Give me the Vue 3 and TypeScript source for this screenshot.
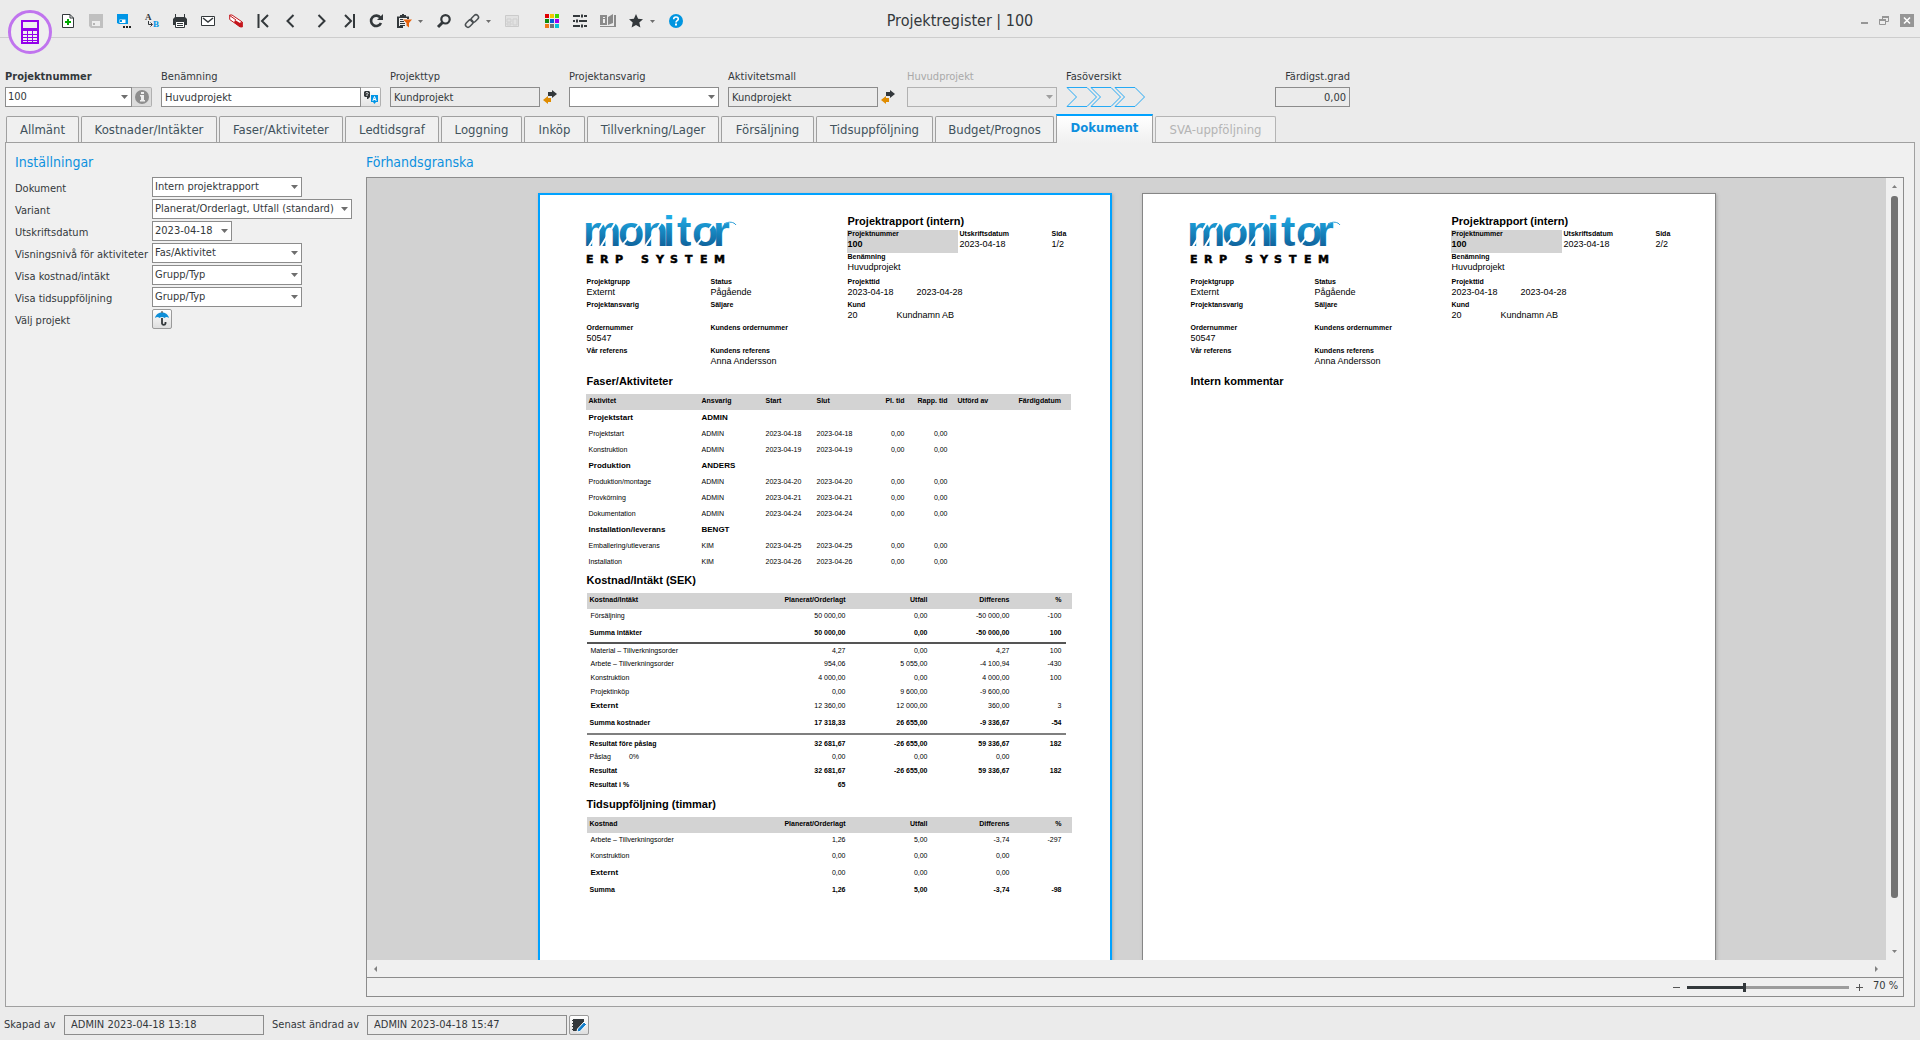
<script setup lang="ts">
import { ref } from 'vue'

interface Tab { label: string; width: number; disabled?: boolean }
interface Setting { id: string; label: string; value: string; size: string }
interface Activity { name: string; who: string; start?: string; end?: string; group?: boolean }
interface CostRow { label: string; plan: string; actual: string; diff: string; pct: string; kind: string; extra?: string }

const tabs: Tab[] = [
  { label: 'Allmänt', width: 73 },
  { label: 'Kostnader/Intäkter', width: 136 },
  { label: 'Faser/Aktiviteter', width: 124 },
  { label: 'Ledtidsgraf', width: 94 },
  { label: 'Loggning', width: 81 },
  { label: 'Inköp', width: 61 },
  { label: 'Tillverkning/Lager', width: 132 },
  { label: 'Försäljning', width: 93 },
  { label: 'Tidsuppföljning', width: 117 },
  { label: 'Budget/Prognos', width: 119 },
  { label: 'Dokument', width: 97 },
  { label: 'SVA-uppföljning', width: 121, disabled: true },
]
const activeTab = ref('Dokument')
const zoom = ref(35)

const settings: Setting[] = [
  { id: 'doc', label: 'Dokument', value: 'Intern projektrapport', size: 'medium' },
  { id: 'variant', label: 'Variant', value: 'Planerat/Orderlagt, Utfall (standard)', size: 'wide' },
  { id: 'date', label: 'Utskriftsdatum', value: '2023-04-18', size: 'small' },
  { id: 'level', label: 'Visningsnivå för aktiviteter', value: 'Fas/Aktivitet', size: 'medium' },
  { id: 'cost', label: 'Visa kostnad/intäkt', value: 'Grupp/Typ', size: 'medium' },
  { id: 'time', label: 'Visa tidsuppföljning', value: 'Grupp/Typ', size: 'medium' },
]

const activities: Activity[] = [
  { name: 'Projektstart', who: 'ADMIN', group: true },
  { name: 'Projektstart', who: 'ADMIN', start: '2023-04-18', end: '2023-04-18' },
  { name: 'Konstruktion', who: 'ADMIN', start: '2023-04-19', end: '2023-04-19' },
  { name: 'Produktion', who: 'ANDERS', group: true },
  { name: 'Produktion/montage', who: 'ADMIN', start: '2023-04-20', end: '2023-04-20' },
  { name: 'Provkörning', who: 'ADMIN', start: '2023-04-21', end: '2023-04-21' },
  { name: 'Dokumentation', who: 'ADMIN', start: '2023-04-24', end: '2023-04-24' },
  { name: 'Installation/leverans', who: 'BENGT', group: true },
  { name: 'Emballering/utleverans', who: 'KIM', start: '2023-04-25', end: '2023-04-25' },
  { name: 'Installation', who: 'KIM', start: '2023-04-26', end: '2023-04-26' },
]

const costs: CostRow[] = [
  { label: 'Försäljning', plan: '50 000,00', actual: '0,00', diff: '-50 000,00', pct: '-100', kind: 'item' },
  { label: 'Summa intäkter', plan: '50 000,00', actual: '0,00', diff: '-50 000,00', pct: '100', kind: 'sum ruled' },
  { label: 'Material – Tillverkningsorder', plan: '4,27', actual: '0,00', diff: '4,27', pct: '100', kind: 'item' },
  { label: 'Arbete – Tillverkningsorder', plan: '954,06', actual: '5 055,00', diff: '-4 100,94', pct: '-430', kind: 'item' },
  { label: 'Konstruktion', plan: '4 000,00', actual: '0,00', diff: '4 000,00', pct: '100', kind: 'item' },
  { label: 'Projektinköp', plan: '0,00', actual: '9 600,00', diff: '-9 600,00', pct: '', kind: 'item' },
  { label: 'Externt', plan: '12 360,00', actual: '12 000,00', diff: '360,00', pct: '3', kind: 'item head' },
  { label: 'Summa kostnader', plan: '17 318,33', actual: '26 655,00', diff: '-9 336,67', pct: '-54', kind: 'sum ruled soft' },
  { label: 'Resultat före påslag', plan: '32 681,67', actual: '-26 655,00', diff: '59 336,67', pct: '182', kind: 'sum lead' },
  { label: 'Påslag', extra: '0%', plan: '0,00', actual: '0,00', diff: '0,00', pct: '', kind: 'result' },
  { label: 'Resultat', plan: '32 681,67', actual: '-26 655,00', diff: '59 336,67', pct: '182', kind: 'result bold' },
  { label: 'Resultat i %', plan: '65', actual: '', diff: '', pct: '', kind: 'result bold' },
]

const hours: CostRow[] = [
  { label: 'Arbete – Tillverkningsorder', plan: '1,26', actual: '5,00', diff: '-3,74', pct: '-297', kind: 'item' },
  { label: 'Konstruktion', plan: '0,00', actual: '0,00', diff: '0,00', pct: '', kind: 'item roomy' },
  { label: 'Externt', plan: '0,00', actual: '0,00', diff: '0,00', pct: '', kind: 'item head roomy' },
  { label: 'Summa', plan: '1,26', actual: '5,00', diff: '-3,74', pct: '-98', kind: 'sum roomy' },
]

const tables = [
  { title: 'Kostnad/Intäkt (SEK)', first: 'Kostnad/Intäkt', rows: costs },
  { title: 'Tidsuppföljning (timmar)', first: 'Kostnad', rows: hours },
]

const swatches = ['#e00000', '#f0c800', '#3fd800', '#108a10', '#0060d8', '#9a00f0', '#f07818', '#6e7478', '#00c4d8']
</script>

<template>
  <div class="app">
    <header class="toolbar">
      <div class="badge">
        <svg width="44" height="44" viewBox="0 0 44 44">
          <circle cx="22" cy="22" r="20.5" fill="#efefef" stroke="#c074ee" stroke-width="3" />
          <path d="M13 10H31V34H13Z" fill="#9400ea" />
          <path d="M15 12H29V18H15Z" fill="#efefef" />
          <path d="M15 21h4v3h-4zM20 21h4v3h-4zM25 21h4v3h-4zM15 25h4v2h-4zM20 25h4v2h-4zM25 25h4v2h-4zM15 28h4v2h-4zM20 28h4v2h-4zM25 28h4v2h-4zM15 31h4v1h-4zM20 31h4v1h-4zM25 31h4v1h-4z" fill="#efefef" />
        </svg>
      </div>
      <nav class="tools">
        <button aria-label="Ny"><svg width="14" height="14" viewBox="0 0 14 14"><path d="M1.500.5H9L12.500 4V13.500H1.500Z" fill="#fff" stroke="#33383b" /><path d="M9 .5V4H12.500" fill="none" stroke="#33383b" /><path d="M6 5h2v2h2v2H8v2H6V9H4V7h2z" fill="#00a800" /></svg></button>
        <button aria-label="Spara"><svg width="14" height="14" viewBox="0 0 14 14"><path d="M0 0H14V14H2L0 12Z" fill="#c0c0c0" /><path d="M3 7h8v5H3z" fill="#ededed" /><path d="M4 9h2v2H4z" fill="#b5b5b5" /></svg></button>
        <button aria-label="Spara som"><svg width="14" height="14" viewBox="0 0 14 14"><path d="M0 0H11V10H2L0 9Z" fill="#0095e6" /><path d="M2.500 5.500h6V9h-6z" fill="#fff" /><path d="M3 6h2v2H3z" fill="#0095e6" /><path d="M6 12h2v2H6zM9 12h2v2H9zM12 12h2v2h-2z" fill="#222" /></svg></button>
        <button aria-label="Byt namn"><svg width="16" height="16" viewBox="0 0 16 16"><text x="1" y="7" class="glyph dark">A</text><text x="9" y="14" class="glyph blue">B</text><path d="M4.500 8V11.500H8M6.500 9.500L8.500 11.500L6.500 13.500" fill="none" stroke="#33383b" /></svg></button>
        <button aria-label="Skriv ut"><svg width="14" height="14" viewBox="0 0 14 14"><path d="M3 0H11V3H12V0H2V3H3Z" fill="#33383b" /><path d="M0 5 2 3H12L14 5V11H12V8H2V11H0Z" fill="#33383b" /><path d="M2.500 7.500H11.500V13.500H2.500Z" fill="#fff" stroke="#33383b" /><path d="M4 9.500H10M4 11.500H10" stroke="#33383b" /></svg></button>
        <button aria-label="E-post"><svg width="14" height="14" viewBox="0 0 14 14"><path d="M.5 2.500H13.500V11.500H.5Z" fill="#fff" stroke="#33383b" /><path d="M2 4 7 8 12 4" fill="none" stroke="#33383b" stroke-width="1.500" /></svg></button>
        <button aria-label="Ta bort"><svg width="14" height="14" viewBox="0 0 14 14"><path d="M.7 1 3 1 13.300 8V13L11 12.800.7 5.500Z" fill="#fff" stroke="#c4161c" /><path d="M6 6 11 9V13.300L5 8.500ZM11 8.500 13.500 8V13H11Z" fill="#c4161c" /><path d="M.7 1.500 7 6" stroke="#c4161c" /></svg></button>
        <button aria-label="Första"><svg width="14" height="14" viewBox="0 0 14 14"><path d="M1.500 0V14M11 1 5 7 11 13" fill="none" stroke="#33383b" stroke-width="2" /></svg></button>
        <button aria-label="Föregående"><svg width="14" height="14" viewBox="0 0 14 14"><path d="M8.500 1 2.500 7 8.500 13" fill="none" stroke="#33383b" stroke-width="2" /></svg></button>
        <button aria-label="Nästa"><svg width="14" height="14" viewBox="0 0 14 14"><path d="M5.500 1 11.500 7 5.500 13" fill="none" stroke="#33383b" stroke-width="2" /></svg></button>
        <button aria-label="Sista"><svg width="14" height="14" viewBox="0 0 14 14"><path d="M13 0V14M4 1 10 7 4 13" fill="none" stroke="#33383b" stroke-width="2" /></svg></button>
        <button aria-label="Uppdatera"><svg width="14" height="14" viewBox="0 0 14 14"><path d="M11.500 3.800A5.200 5.200 0 1 0 12 9" fill="none" stroke="#33383b" stroke-width="2.600" /><path d="M14 0V6H8Z" fill="#33383b" /></svg></button>
        <button aria-label="Urval"><svg width="16" height="14" viewBox="0 0 16 14"><path d="M1 2.500H4V1H6V0H8V1H10V2.500H13V5H11V4H3V12H7V14H1Z" fill="#33383b" /><path d="M3 4H11V12H3Z" fill="#eee" /><path d="M4 5.500H7M4 7.500H8M4 9.500H9M4 11.500H9" stroke="#33383b" /><path d="M7 5.500H16L13 9V13.500L10.500 11.500V9Z" fill="#e8610a" /></svg></button>
        <button class="caret" aria-label="Fler urval"><svg width="5" height="3" viewBox="0 0 5 3"><path d="M0 0H5L2.500 3Z" fill="#6e6e6e" /></svg></button>
        <button aria-label="Sök"><svg width="14" height="14" viewBox="0 0 14 14"><circle cx="8.500" cy="5.300" r="4.200" fill="none" stroke="#33383b" stroke-width="2.200" /><path d="M5.500 8.500 1 13" stroke="#33383b" stroke-width="3" /></svg></button>
        <button aria-label="Länka"><svg width="14" height="14" viewBox="0 0 14 14"><g fill="none" stroke="#4a4f52" stroke-width="1.500"><rect x="5.500" y="2" width="8.500" height="5" rx="2.500" transform="rotate(-45 9.750 4.500)" /><rect x="0" y="7" width="8.500" height="5" rx="2.500" transform="rotate(-45 4.250 9.500)" /></g></svg></button>
        <button class="caret" aria-label="Fler länkar"><svg width="5" height="3" viewBox="0 0 5 3"><path d="M0 0H5L2.500 3Z" fill="#6e6e6e" /></svg></button>
        <button aria-label="Layout"><svg width="14" height="14" viewBox="0 0 14 14"><path d="M.5 1.500H13.500V12.500H.5Z" fill="#e2e2e2" stroke="#cbcbcb" /><path d="M2 5H6V8H2ZM2 9H6V11H2ZM8 5H12V11H8Z" fill="none" stroke="#cfcfcf" /></svg></button>
        <span class="spacer"></span>
        <button aria-label="Färger"><svg width="14" height="14" viewBox="0 0 14 14"><rect v-for="(c, i) in swatches" :key="c" :x="(i % 3) * 5" :y="Math.floor(i / 3) * 5" width="4" height="4" :fill="c" /></svg></button>
        <button aria-label="Inställningar"><svg width="14" height="14" viewBox="0 0 14 14"><path d="M0 2H7M11 2H14M0 7H2M6 7H14M0 12H7M11 12H14" stroke="#33383b" stroke-width="2" /><path d="M8 .5h2v3H8zM3 5.500h2v3H3zM8 10.500h2v3H8z" fill="#33383b" /></svg></button>
        <button aria-label="Handbok"><svg width="16" height="14" viewBox="0 0 16 14"><path d="M0 1H7V11H0ZM8 3 13 0V9L8 11ZM14 1H16V13H0V12H14Z" fill="#8a8a8a" /><path d="M3 3h2v1H3zM3 5h2v4H3z" fill="#eee" /></svg></button>
        <button aria-label="Favorit"><svg width="14" height="14" viewBox="0 0 14 14"><path d="M7 0 9.100 4.800 14 5.200 10.300 8.600 11.400 13.600 7 11 2.600 13.600 3.700 8.600 0 5.200 4.900 4.800Z" fill="#33383b" /></svg></button>
        <button class="caret" aria-label="Fler favoriter"><svg width="5" height="3" viewBox="0 0 5 3"><path d="M0 0H5L2.500 3Z" fill="#6e6e6e" /></svg></button>
        <button aria-label="Hjälp"><svg width="14" height="14" viewBox="0 0 14 14"><circle cx="7" cy="7" r="7" fill="#0095e0" /><path d="M4.700 5.200C4.700 2.200 9.300 2.300 9.300 5 9.300 6.700 7 6.700 7 8.500" fill="none" stroke="#fff" stroke-width="1.600" /><rect x="6" y="9.500" width="2" height="2" fill="#fff" /></svg></button>
      </nav>
      <h1 class="title">Projektregister | 100</h1>
      <div class="window">
        <button aria-label="Minimera"><svg width="7" height="14" viewBox="0 0 7 14"><path d="M0 8H7V10H0Z" fill="#969696" /></svg></button>
        <button aria-label="Återställ"><svg width="10" height="14" viewBox="0 0 10 14"><path d="M3.500 5V2.500H9.500V7.500H7" fill="none" stroke="#969696" /><path d="M3 2H10V4H3Z" fill="#969696" /><path d="M.5 5.500H6.500V10.500H.5Z" fill="#eee" stroke="#969696" /><path d="M0 5H7V7H0Z" fill="#969696" /></svg></button>
        <button aria-label="Stäng"><svg width="14" height="14" viewBox="0 0 14 14"><path d="M0 0H14V13H0Z" fill="#969696" /><path d="M4 3.500 10 9.500M10 3.500 4 9.500" stroke="#fff" stroke-width="1.600" /></svg></button>
      </div>
    </header>

    <form class="fields" @submit.prevent>
      <div class="field number">
        <label class="strong" for="projnr">Projektnummer</label>
        <div class="row"><select id="projnr"><option>100</option></select><button class="side" type="button" aria-label="Information"><svg width="14" height="14" viewBox="0 0 14 14"><circle cx="7" cy="7" r="7" fill="#8e8e8e" /><path d="M6 2h3v2H6zM5 5h4v5h1v1.500H5V10h1V6.500H5z" fill="#efefef" /></svg></button></div>
      </div>
      <div class="field name">
        <label for="name">Benämning</label>
        <div class="row"><input id="name" type="text" value="Huvudprojekt" /><button class="side light" type="button" aria-label="Översätt"><svg width="16" height="14" viewBox="0 0 16 14"><path d="M2 1H6L7 2V7L5 9H4V7H2L1 6V2Z" fill="#33383b" /><path d="M2.800 3.200C3 2.200 5.300 2.300 5.200 3.500L4 4.700V6" fill="none" stroke="#eee" /><path d="M8 5H15V12H13L11.500 14 10 12H8Z" fill="#0095e6" /><path d="M9.800 11 11.500 6.500 13.200 11M10.500 9.500H12.500" fill="none" stroke="#fff" /></svg></button></div>
      </div>
      <div class="field std">
        <label for="type">Projekttyp</label>
        <input id="type" type="text" value="Kundprojekt" readonly />
      </div>
      <button class="swap" type="button" aria-label="Byt projekttyp"><svg width="14" height="14" viewBox="0 0 14 14"><path d="M5 2H9V0L14 4 9 8V6H5Z" fill="#33383b" /><path d="M8 8H5V6L0 10 5 14V12H8Z" fill="#e08c00" /></svg></button>
      <div class="field std">
        <label for="owner">Projektansvarig</label>
        <select id="owner"><option></option></select>
      </div>
      <div class="field std after">
        <label for="template">Aktivitetsmall</label>
        <input id="template" type="text" value="Kundprojekt" readonly />
      </div>
      <button class="swap" type="button" aria-label="Byt mall"><svg width="14" height="14" viewBox="0 0 14 14"><path d="M5 2H9V0L14 4 9 8V6H5Z" fill="#33383b" /><path d="M8 8H5V6L0 10 5 14V12H8Z" fill="#e08c00" /></svg></button>
      <div class="field std">
        <label class="dim" for="parent">Huvudprojekt</label>
        <select id="parent" disabled><option></option></select>
      </div>
      <div class="field phases after">
        <span class="caption">Fasöversikt</span>
        <svg width="80" height="20" viewBox="0 0 80 20" fill="none" stroke="#26aaf5"><path d="M1 .5H21L30.500 10 21 19.500H1L10.500 10Z" /><path d="M25 .5H45L54.500 10 45 19.500H25L34.500 10Z" /><path d="M49 .5H69L78.500 10 69 19.500H49L58.500 10Z" /></svg>
      </div>
      <div class="field degree">
        <label for="degree">Färdigst.grad</label>
        <input id="degree" type="text" value="0,00" readonly />
      </div>
    </form>

    <div class="tabs" role="tablist">
      <button v-for="t in tabs" :key="t.label" role="tab" class="tab" :class="{ active: t.label === activeTab }" :disabled="t.disabled" :style="{ width: t.width + 'px' }" @click="activeTab = t.label">{{ t.label }}</button>
    </div>

    <main class="panel">
      <section class="settings">
        <h2>Inställningar</h2>
        <div v-for="s in settings" :key="s.id" class="setting">
          <label :for="s.id">{{ s.label }}</label>
          <select :id="s.id" :class="s.size"><option>{{ s.value }}</option></select>
        </div>
        <div class="setting">
          <label for="pick">Välj projekt</label>
          <button id="pick" class="small-btn" type="button" aria-label="Välj projekt"><svg width="14" height="16" viewBox="0 0 14 16"><path d="M0 7C1 3 4 1.500 7 1.500S13 3 14 7C12 5.500 11 5.500 9.500 7 8 5.700 6 5.700 4.500 7 3 5.500 2 5.500 0 7Z" fill="#0f8fd8" /><path d="M7 0V2" stroke="#33383b" /><path d="M7 7V12.500A1.800 1.800 0 0 0 10.500 12.500V11" fill="none" stroke="#33383b" stroke-width="1.800" /></svg></button>
        </div>
      </section>

      <section class="preview">
        <h2>Förhandsgranska</h2>
        <div class="viewer">
          <div class="view-row">
            <div class="canvas">
              <article v-for="page in 2" :key="page" class="page" :class="{ selected: page === 1 }">
                <header class="report-head">
                  <div class="head-left">
                    <svg class="logo" width="152" height="62" viewBox="0 0 152 62" role="img" aria-label="monitor ERP SYSTEM">
                      <defs><linearGradient id="brand" x1="0" y1="0" x2="0" y2="34" gradientUnits="userSpaceOnUse"><stop offset="0" stop-color="#1fb0ea" /><stop offset="1" stop-color="#0f5f98" /></linearGradient></defs>
                      <text class="word" y="32" x="-3 32 56 77 91 106 127" fill="url(#brand)">monitor</text>
                      <path d="M138 10C143 7 148 8 150 11" fill="none" stroke="#2a9ed8" />
                      <path d="M2 34 17 9M14 34 29 9M34 34 54 9M58 34 75 9M108 34 128 9" stroke="#fff" stroke-width="2" />
                      <text class="sub" y="49" x="0 14 29 40 55 70 84 99 114 128">ERP SYSTEM</text>
                    </svg>
                    <dl class="facts">
                      <div><dt>Projektgrupp</dt><dd>Externt</dd></div>
                      <div><dt>Status</dt><dd>Pågående</dd></div>
                      <div><dt>Projektansvarig</dt><dd></dd></div>
                      <div><dt>Säljare</dt><dd></dd></div>
                      <div><dt>Ordernummer</dt><dd>50547</dd></div>
                      <div><dt>Kundens ordernummer</dt><dd></dd></div>
                      <div><dt>Vår referens</dt><dd></dd></div>
                      <div><dt>Kundens referens</dt><dd>Anna Andersson</dd></div>
                    </dl>
                  </div>
                  <div class="head-right">
                    <h3>Projektrapport (intern)</h3>
                    <dl class="ids">
                      <div class="shaded"><dt>Projektnummer</dt><dd>100</dd></div>
                      <div class="print-date"><dt>Utskriftsdatum</dt><dd>2023-04-18</dd></div>
                      <div><dt>Sida</dt><dd>{{ page }}/2</dd></div>
                    </dl>
                    <dl class="ids"><div><dt>Benämning</dt><dd>Huvudprojekt</dd></div></dl>
                    <dl class="facts single">
                      <div><dt>Projekttid</dt><dd><span class="from">2023-04-18</span><span>2023-04-28</span></dd></div>
                      <div><dt>Kund</dt><dd><span class="cust">20</span><span>Kundnamn AB</span></dd></div>
                    </dl>
                  </div>
                </header>

                <template v-if="page === 1">
                  <h3 class="section">Faser/Aktiviteter</h3>
                  <table class="acts">
                    <colgroup><col class="a1" /><col class="a2" /><col class="a3" /><col class="a3b" /><col class="a4" /><col class="a5" /><col class="a6" /><col /></colgroup>
                    <thead><tr><th>Aktivitet</th><th>Ansvarig</th><th>Start</th><th>Slut</th><th class="r">Pl. tid</th><th class="r">Rapp. tid</th><th class="by">Utförd av</th><th>Färdigdatum</th></tr></thead>
                    <tbody>
                      <tr v-for="(a, i) in activities" :key="i" :class="{ group: a.group }">
                        <td>{{ a.name }}</td><td>{{ a.who }}</td><td>{{ a.start }}</td><td>{{ a.end }}</td>
                        <td class="r">{{ a.group ? '' : '0,00' }}</td><td class="r">{{ a.group ? '' : '0,00' }}</td><td></td><td></td>
                      </tr>
                    </tbody>
                  </table>
                  <template v-for="t in tables" :key="t.title">
                    <h3 class="section">{{ t.title }}</h3>
                    <table class="money">
                      <colgroup><col class="m1" /><col class="m2" /><col class="m3" /><col class="m3" /><col class="m4" /><col /></colgroup>
                      <thead><tr><th>{{ t.first }}</th><th class="r">Planerat/Orderlagt</th><th class="r">Utfall</th><th class="r">Differens</th><th class="r pct">%</th><th></th></tr></thead>
                      <tbody>
                        <tr v-for="r in t.rows" :key="r.label" :class="r.kind">
                          <td>{{ r.label }}<span v-if="r.extra" class="extra">{{ r.extra }}</span></td>
                          <td class="r">{{ r.plan }}</td><td class="r">{{ r.actual }}</td><td class="r">{{ r.diff }}</td><td class="r pct">{{ r.pct }}</td><td class="tail"></td>
                        </tr>
                      </tbody>
                    </table>
                  </template>
                </template>
                <h3 v-else class="section">Intern kommentar</h3>
              </article>
            </div>
            <div class="vbar">
              <svg width="5" height="3" viewBox="0 0 5 3"><path d="M0 3H5L2.500 0Z" fill="#808080" /></svg>
              <span class="thumb"></span>
              <svg width="5" height="3" viewBox="0 0 5 3"><path d="M0 0H5L2.500 3Z" fill="#808080" /></svg>
            </div>
          </div>
          <div class="hbar">
            <svg width="3" height="6" viewBox="0 0 3 6"><path d="M3 0V6L0 3Z" fill="#808080" /></svg>
            <svg width="3" height="6" viewBox="0 0 3 6"><path d="M0 0V6L3 3Z" fill="#808080" /></svg>
          </div>
          <div class="zoombar">
            <button type="button" aria-label="Zooma ut"><svg width="7" height="7" viewBox="0 0 7 7"><path d="M0 3.500H7" stroke="#555" /></svg></button>
            <input v-model="zoom" type="range" min="0" max="100" aria-label="Zoom" />
            <button type="button" aria-label="Zooma in"><svg width="7" height="7" viewBox="0 0 7 7"><path d="M0 3.500H7M3.500 0V7" stroke="#555" /></svg></button>
            <output>70 %</output>
          </div>
        </div>
      </section>
    </main>

    <footer class="status">
      <label for="created">Skapad av</label>
      <input id="created" class="created" type="text" value="ADMIN 2023-04-18 13:18" readonly />
      <label for="changed">Senast ändrad av</label>
      <input id="changed" type="text" value="ADMIN 2023-04-18 15:47" readonly />
      <button class="small-btn" type="button" aria-label="Ändringslogg"><svg width="16" height="16" viewBox="0 0 16 16"><path d="M2 2H13V6L6 13V14H2Z" fill="#33383b" /><path d="M1 3.500H3M1 6.500H3M1 9.500H3M1 12.500H3" stroke="#33383b" /><path d="M13 5 15.500 7.500 9 14.500 6 15 6.500 12Z" fill="#1580cc" stroke="#fff" /></svg></button>
    </footer>
  </div>
</template>

<style>
body { margin: 0; background: #ebebeb; }
</style>

<style scoped>
.app {
  --line: #8c8c8c;
  height: 100vh;
  display: flex;
  flex-direction: column;
  background: #ebebeb;
  color: #33383b;
  font: 11px/14px "DejaVu Sans Condensed", "DejaVu Sans", sans-serif;
}
.app * { box-sizing: border-box; }
button { padding: 0; border: 0; background: none; font: inherit; color: inherit; }
svg { display: block; overflow: visible; }
h1, h2, h3, dl, dd { margin: 0; }
select, input {
  height: 20px;
  margin: 0;
  padding: 0 3px;
  border: 1px solid var(--line);
  border-radius: 0;
  background: #fff;
  color: #33383b;
  font: inherit;
  outline: none;
}
select {
  appearance: none;
  padding: 0 2px;
  background: #fff url("data:image/svg+xml,%3Csvg xmlns='http://www.w3.org/2000/svg' width='7' height='4'%3E%3Cpath d='M0 0H7L3.500 4Z' fill='%236e6e6e'/%3E%3C/svg%3E") no-repeat right 3px center;
}
select:disabled { opacity: .6; background-color: #ebebeb; }
input[readonly] { background: #ebebeb; }

.toolbar {
  position: relative;
  flex: none;
  display: grid;
  grid-template-columns: 1fr auto 1fr;
  height: 38px;
  padding-top: 5px;
  border-bottom: 1px solid #cdcdcd;
}
.badge { position: absolute; left: 8px; top: 10px; z-index: 1; }
.tools { display: flex; height: 32px; padding-left: 54px; }
.tools button { width: 28px; display: flex; align-items: center; justify-content: center; }
.tools .caret { width: 12px; justify-content: flex-start; }
.spacer { width: 12px; }
.glyph { font: bold 9px/10px "Liberation Serif", serif; }
.dark { fill: #33383b; }
.blue { fill: #0095e6; }
.title { font-size: 16px; line-height: 32px; font-weight: normal; white-space: nowrap; }
.window { display: flex; justify-content: flex-end; align-items: center; gap: 11px; height: 32px; padding-right: 6px; }

.fields { flex: none; display: flex; align-items: flex-end; padding: 32px 5px 0; }
.field { display: flex; flex-direction: column; gap: 3px; }
.field input, .field select { width: 100%; }
.strong { font-weight: bold; }
.dim { color: #a9a9a9; }
.row { display: flex; }
.number { width: 147px; margin-right: 9px; }
.name { width: 220px; margin-right: 9px; }
.std { width: 150px; }
.after { margin-left: 9px; }
.side {
  flex: none;
  width: 20px;
  height: 20px;
  display: flex;
  align-items: center;
  justify-content: center;
  border: 1px solid #b0b0b0;
  border-left: 0;
  border-radius: 0 2px 2px 0;
  background: #dcdcdc;
}
.light { background: linear-gradient(#fff, #e4e4e4); }
.swap { width: 29px; height: 20px; padding-left: 3px; }
.phases { width: 80px; }
.degree { width: 75px; margin-left: 129px; text-align: right; }
.degree label { white-space: nowrap; }
.degree input { text-align: right; }

.tabs { flex: none; display: flex; align-items: flex-end; gap: 2px; height: 35px; padding-left: 6px; }
.tab {
  height: 26px;
  border: 1px solid #a0a0a0;
  border-bottom: 0;
  border-radius: 2px 2px 0 0;
  background: #f0f0f0;
  color: #41525c;
  font-size: 13px;
  white-space: nowrap;
}
.tab:disabled { color: #b4b4b4; border-color: #b4b4b4; }
.active {
  position: relative;
  height: 29px;
  margin-bottom: -1px;
  padding-bottom: 3px;
  border-top: 2px solid #00a2ff;
  border-radius: 0;
  background: linear-gradient(#fff, #f0f0f0);
  color: #0f8fde;
  font-weight: bold;
}

.panel {
  flex: 1;
  min-height: 0;
  display: flex;
  margin: 0 5px;
  padding: 9px 10px 9px 9px;
  border: 1px solid #a0a0a0;
  background: #f0f0f0;
}
h2 { height: 25px; font-size: 14px; line-height: 20px; font-weight: normal; color: #0d91df; }
.settings { flex: none; width: 351px; }
.setting { display: flex; align-items: center; height: 20px; margin-bottom: 2px; }
.setting label { width: 137px; padding-top: 3px; white-space: nowrap; }
.small { width: 80px; }
.medium { width: 150px; }
.wide { width: 200px; }
.small-btn {
  width: 20px;
  height: 20px;
  display: flex;
  align-items: center;
  justify-content: center;
  border: 1px solid #9a9a9a;
  border-radius: 2px;
  background: linear-gradient(#fff, #dedede);
}

.preview { flex: 1; min-width: 0; display: flex; flex-direction: column; }
.viewer { flex: 1; min-height: 0; display: flex; flex-direction: column; border: 1px solid var(--line); }
.view-row { flex: 1; min-height: 0; display: flex; }
.canvas {
  flex: 1;
  min-width: 0;
  display: flex;
  justify-content: center;
  gap: 30px;
  padding-top: 15px;
  overflow: hidden;
  background: #d2d2d2;
}
.vbar { width: 17px; display: flex; flex-direction: column; align-items: center; padding: 7px 0; }
.thumb { width: 7px; flex: 1; margin: 8px 0 52px; border-radius: 3px; background: #737373; }
.hbar { height: 17px; display: flex; justify-content: space-between; align-items: center; padding: 0 25px 0 7px; }
.zoombar { height: 19px; display: flex; justify-content: flex-end; align-items: center; padding-right: 5px; border-top: 1px solid var(--line); }
.zoombar input { appearance: none; width: 162px; height: 9px; margin: 0 7px; padding: 0; border: 0; background: none; }
.zoombar input::-webkit-slider-runnable-track { height: 3px; background: linear-gradient(90deg, #33383b 35%, #9c9c9c 35%); }
.zoombar input::-webkit-slider-thumb { appearance: none; width: 3px; height: 9px; margin-top: -3px; background: #33383b; }
.zoombar output { width: 25px; margin-left: 10px; padding-bottom: 3px; white-space: nowrap; }

.page {
  flex: none;
  width: 574px;
  height: 812px;
  padding: 21px 41px 0 48px;
  background: #fff;
  outline: 1px solid #868686;
  outline-offset: -1px;
  box-shadow: 1px 1px 3px #aaa;
  color: #000;
  font: 7px/8px "Liberation Sans", Arial, sans-serif;
}
.selected { outline: 2px solid #00a2ff; outline-offset: -2px; }
.report-head { display: flex; height: 160px; }
.head-left { width: 261px; }
.head-right { flex: 1; }
.word { font: bold 43px/44px "Liberation Sans", sans-serif; }
.sub { font: bold 11px/12px "DejaVu Sans", sans-serif; stroke: #000; stroke-width: .5px; }
h3 { font-size: 11px; line-height: 14px; font-weight: bold; }
.head-right h3 { padding: 0 0 2px 1px; }
dt { font-weight: bold; }
.ids dt { line-height: 7px; }
dd { font-size: 9px; white-space: nowrap; }
.facts { display: grid; grid-template-columns: 124px auto; padding-left: 1px; }
.facts div { height: 23px; }
.facts dt { line-height: 11px; }
.facts dd { display: flex; line-height: 11px; }
.single { display: block; }
.from { width: 69px; }
.cust { width: 49px; }
.ids { display: flex; }
.ids div { height: 23px; padding-left: 1px; }
.ids dd { line-height: 14px; }
.shaded { width: 111px; background: #d3d3d3; }
.shaded dd { font-weight: bold; }
.print-date { width: 92px; margin-left: 1px; }

.section { height: 20px; padding-left: 1px; }
table { width: 485px; table-layout: fixed; border-collapse: collapse; white-space: nowrap; }
th, td { padding: 0 0 0 3px; text-align: left; }
thead tr { height: 16px; background: #d3d3d3; }
th { padding-bottom: 3px; }
.r { padding: 0; text-align: right; }
th.r { padding-bottom: 3px; }
.r.pct { padding-right: 4px; }
.acts { margin-bottom: 3px; }
.acts tbody tr { height: 16px; }
.acts .group { font-size: 8px; font-weight: bold; }
.a1 { width: 113px; }
.a2 { width: 64px; }
.a3 { width: 51px; }
.a3b { width: 48px; }
.a4 { width: 43px; }
.a5 { width: 43px; }
.a6 { width: 68px; }
.acts .by { padding-left: 10px; }
.money { margin: 0 0 5px 1px; }
.m1 { width: 130px; }
.m2 { width: 129px; }
.m3 { width: 82px; }
.m4 { width: 56px; }
.item { height: 14px; }
.item td:first-child { padding-left: 4px; }
.sum, .bold { font-weight: bold; }
.sum { height: 20px; }
.ruled td:not(.tail) { border-bottom: 2px solid #555; }
.soft { height: 21px; }
.soft td:not(.tail) { border-bottom-color: #7f7f7f; }
.lead { height: 16px; }
.lead td { padding-top: 3px; }
.result { height: 14px; }
.roomy { height: 17px; }
.head td:first-child { font-size: 8px; font-weight: bold; }
.extra { margin-left: 18px; }

.status { flex: none; display: flex; align-items: center; height: 33px; padding: 2px 4px 0; }
.status label { width: 60px; }
.status label + input { width: 200px; padding-left: 6px; }
.status .created { margin-right: 8px; }
.status .created + label { width: 95px; }
.status .small-btn { margin-left: 2px; }
</style>
